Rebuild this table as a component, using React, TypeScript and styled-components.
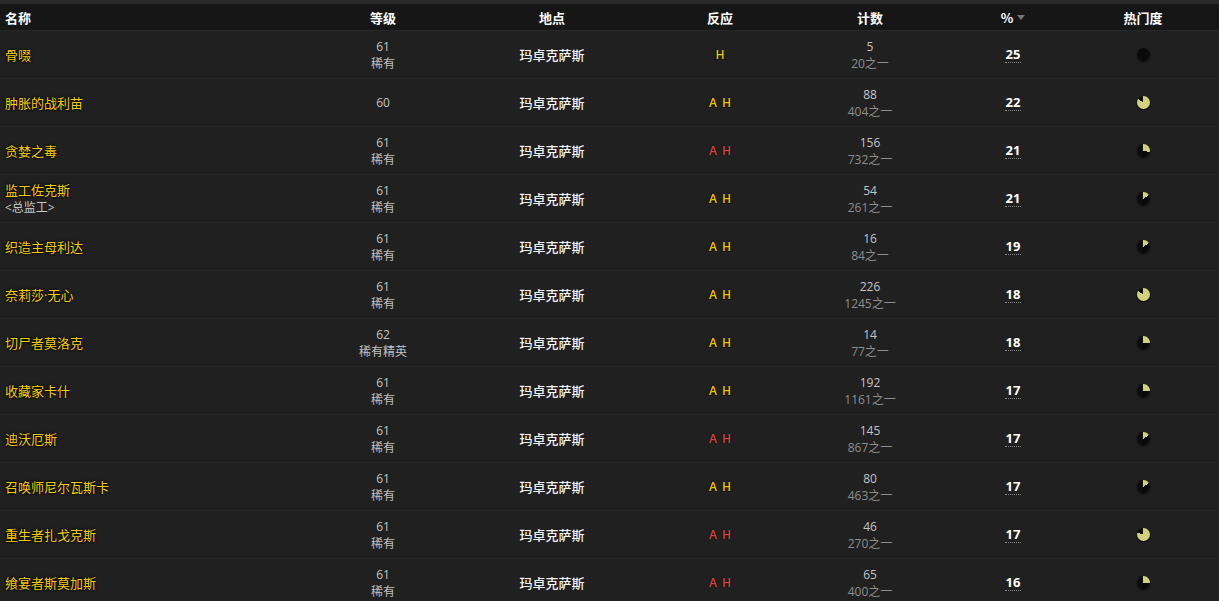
import React from "react";
import styled, { createGlobalStyle } from "styled-components";

const Global = createGlobalStyle`
  html, body { margin: 0; padding: 0; background: #202020; }
  body { font-family: "Open Sans", "Noto Sans CJK SC", sans-serif; }
`;

const COLS = "321px 124px 214px 122px 178px 108px 152px";

const Table = styled.div`
  width: 1219px;
  border-top: 4px solid #2a2a2a;
  background: #202020;
`;

const HeaderRow = styled.div`
  display: grid;
  grid-template-columns: ${COLS};
  height: 26px;
  align-items: center;
  background: #161616;
`;

const HeadCell = styled.div<{ $left?: boolean }>`
  display: flex;
  align-items: center;
  justify-content: ${(p) => (p.$left ? "flex-start" : "center")};
  padding-left: ${(p) => (p.$left ? "5px" : "0")};
  color: #fff;
  font-weight: 700;
  font-size: 13px;
  font-family: "Noto Sans CJK SC", sans-serif;
  gap: 4px;
`;

const SortArrow = styled.span`
  width: 0;
  height: 0;
  border-left: 4px solid transparent;
  border-right: 4px solid transparent;
  border-top: 5px solid #777;
  margin-top: 1px;
`;

const Row = styled.div`
  display: grid;
  grid-template-columns: ${COLS};
  height: 48px;
  align-items: center;
  background: #202020;
  border-top: 1px solid #272727;
  box-sizing: border-box;
`;

const NameCell = styled.div`
  padding-left: 5px;
  display: flex;
  flex-direction: column;
  line-height: 18px;
`;

const NameLink = styled.span`
  color: #f6cd00;
  font-size: 13px;
  text-shadow: 0 0 3px #000, 0 0 2px #000;
`;

const NameTag = styled.span`
  color: #c8c8c8;
  font-size: 12px;
`;

const Stack = styled.div`
  display: flex;
  flex-direction: column;
  align-items: center;
  line-height: 17px;
`;

const Main = styled.span`
  color: #c4c4c4;
  font-size: 12px;
`;

const Sub = styled.span<{ $dim?: boolean }>`
  color: ${(p) => (p.$dim ? "#8e8e8e" : "#c0c0c0")};
  font-size: 12px;
`;

const Zone = styled.div`
  text-align: center;
  color: #f4f4f4;
  font-size: 13px;
  font-weight: 500;
`;

const Reaction = styled.div`
  display: flex;
  justify-content: center;
  gap: 5px;
  font-size: 12px;
  font-weight: 600;
`;

const Faction = styled.span<{ $red?: boolean }>`
  color: ${(p) => (p.$red ? "#d84444" : "#ecc400")};
  text-shadow: 0 0 2px #000;
`;

const PctCell = styled.div`
  display: flex;
  justify-content: center;
`;

const Pct = styled.span`
  color: #fff;
  font-weight: 700;
  font-size: 13px;
  line-height: 16px;
  border-bottom: 1px dotted #888;
  padding: 0 1px;
`;

const PieCell = styled.div`
  display: flex;
  justify-content: center;
`;

const Pie = styled.div`
  width: 13px;
  height: 13px;
  border-radius: 50%;
  box-shadow: 0 1px 2px rgba(0, 0, 0, 0.8);
`;

type Item = {
  name: string;
  tag?: string;
  level: string;
  cls?: string;
  a: boolean;
  red: boolean;
  count: string;
  of: string;
  pct: string;
  pie: number;
};

const rows: Item[] = [
  { name: "骨啜", level: "61", cls: "稀有", a: false, red: false, count: "5", of: "20之一", pct: "25", pie: 0 },
  { name: "肿胀的战利苗", level: "60", a: true, red: false, count: "88", of: "404之一", pct: "22", pie: 84 },
  { name: "贪婪之毒", level: "61", cls: "稀有", a: true, red: true, count: "156", of: "732之一", pct: "21", pie: 30 },
  { name: "监工佐克斯", tag: "<总监工>", level: "61", cls: "稀有", a: true, red: false, count: "54", of: "261之一", pct: "21", pie: 16 },
  { name: "织造主母利达", level: "61", cls: "稀有", a: true, red: false, count: "16", of: "84之一", pct: "19", pie: 16 },
  { name: "奈莉莎·无心", level: "61", cls: "稀有", a: true, red: false, count: "226", of: "1245之一", pct: "18", pie: 84 },
  { name: "切尸者莫洛克", level: "62", cls: "稀有精英", a: true, red: false, count: "14", of: "77之一", pct: "18", pie: 26 },
  { name: "收藏家卡什", level: "61", cls: "稀有", a: true, red: false, count: "192", of: "1161之一", pct: "17", pie: 26 },
  { name: "迪沃厄斯", level: "61", cls: "稀有", a: true, red: true, count: "145", of: "867之一", pct: "17", pie: 16 },
  { name: "召唤师尼尔瓦斯卡", level: "61", cls: "稀有", a: true, red: false, count: "80", of: "463之一", pct: "17", pie: 16 },
  { name: "重生者扎戈克斯", level: "61", cls: "稀有", a: true, red: true, count: "46", of: "270之一", pct: "17", pie: 80 },
  { name: "飨宴者斯莫加斯", level: "61", cls: "稀有", a: true, red: true, count: "65", of: "400之一", pct: "16", pie: 26 },
];

export default function App() {
  return (
    <>
      <Global />
      <Table>
        <HeaderRow>
          <HeadCell $left>名称</HeadCell>
          <HeadCell>等级</HeadCell>
          <HeadCell>地点</HeadCell>
          <HeadCell>反应</HeadCell>
          <HeadCell>计数</HeadCell>
          <HeadCell>
            %<SortArrow />
          </HeadCell>
          <HeadCell>热门度</HeadCell>
        </HeaderRow>
        {rows.map((r) => (
          <Row key={r.name}>
            <NameCell>
              <NameLink>{r.name}</NameLink>
              {r.tag && <NameTag>{r.tag}</NameTag>}
            </NameCell>
            <Stack>
              <Main>{r.level}</Main>
              {r.cls && <Sub>{r.cls}</Sub>}
            </Stack>
            <Zone>玛卓克萨斯</Zone>
            <Reaction>
              {r.a && <Faction $red={r.red}>A</Faction>}
              <Faction $red={r.red}>H</Faction>
            </Reaction>
            <Stack>
              <Main>{r.count}</Main>
              <Sub $dim>{r.of}</Sub>
            </Stack>
            <PctCell>
              <Pct>{r.pct}</Pct>
            </PctCell>
            <PieCell>
              <Pie
                style={{
                  background: `conic-gradient(#d2d17c 0 ${r.pie}%, #0b0b0b ${r.pie}% 100%)`,
                }}
              />
            </PieCell>
          </Row>
        ))}
      </Table>
    </>
  );
}
